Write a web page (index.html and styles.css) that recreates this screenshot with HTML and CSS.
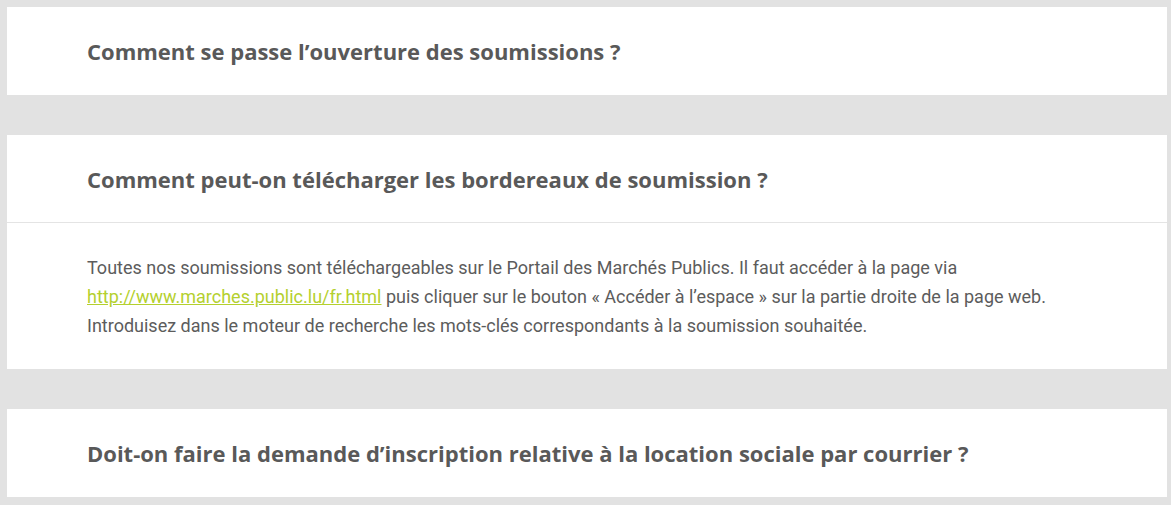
FILE: index.html
```html
<!DOCTYPE html>
<html lang="fr">
<head>
<meta charset="utf-8">
<title>FAQ</title>
<link rel="stylesheet" href="styles.css">
</head>
<body>
<div class="faq">
  <section class="item">
    <h2 class="question">Comment se passe l’ouverture des soumissions ?</h2>
  </section>
  <section class="item open">
    <h2 class="question">Comment peut-on télécharger les bordereaux de soumission ?</h2>
    <div class="answer">
      <p>Toutes nos soumissions sont téléchargeables sur le Portail des Marchés Publics. Il faut accéder à la page via<br><a href="#">http://www.marches.public.lu/fr.html</a> puis cliquer sur le bouton « Accéder à l’espace » sur la partie droite de la page web.<br>Introduisez dans le moteur de recherche les mots-clés correspondants à la soumission souhaitée.</p>
    </div>
  </section>
  <section class="item">
    <h2 class="question">Doit-on faire la demande d’inscription relative à la location sociale par courrier ?</h2>
  </section>
</div>
</body>
</html>
```
FILE: styles.css
```css
html, body {
  margin: 0;
  padding: 0;
  background: #e2e2e2;
}
.faq {
  padding: 7px 4px 8px 7px;
  display: flex;
  flex-direction: column;
  gap: 40px;
}
.item {
  background: #fff;
}
.question {
  margin: 0;
  height: 87px;
  display: flex;
  align-items: center;
  padding: 0 80px;
  border-bottom: 1px solid #fff;
  box-sizing: content-box;
  font-family: "Open Sans", sans-serif;
  font-weight: 700;
  font-size: 22px;
  color: #595959;
}
.open .question {
  border-bottom-color: #e4e4e4;
}
.answer {
  padding: 30px 80px 29px;
}
.answer p {
  margin: 0;
  font-family: Roboto, sans-serif;
  font-size: 18px;
  line-height: 29px;
  color: #5c5c5c;
}
.answer a {
  color: #b4d02e;
  text-decoration: underline;
}
```
